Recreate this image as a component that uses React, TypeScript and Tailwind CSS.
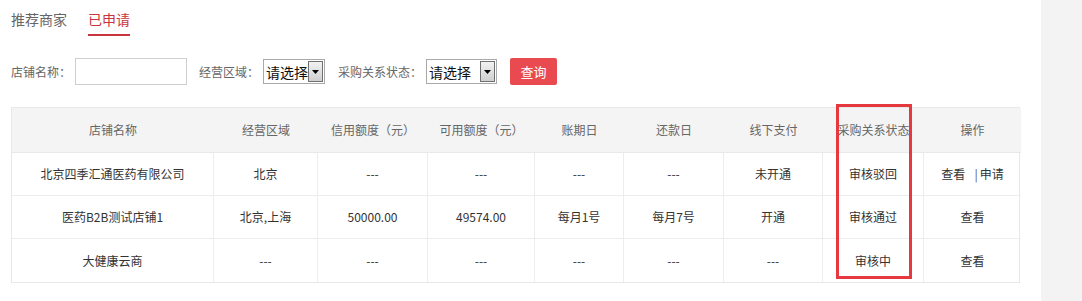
import { Fragment } from 'react';

const font = { fontFamily: '"Noto Sans CJK SC", "Microsoft YaHei", sans-serif' };

const headers = [
  '店铺名称',
  '经营区域',
  '信用额度（元）',
  '可用额度（元）',
  '账期日',
  '还款日',
  '线下支付',
  '采购关系状态',
  '操作',
];

const rows: string[][] = [
  ['北京四季汇通医药有限公司', '北京', '---', '---', '---', '---', '未开通', '审核驳回', 'both'],
  ['医药B2B测试店铺1', '北京,上海', '50000.00', '49574.00', '每月1号', '每月7号', '开通', '审核通过', 'view'],
  ['大健康云商', '---', '---', '---', '---', '---', '---', '审核中', 'view'],
];

function SelectBox({ width }: { width: string }) {
  return (
    <div className={`${width} h-[25px] flex items-center justify-between border border-[#a9a9a9] bg-white pl-[2px] pr-[1px]`}>
      <span className="text-[14px] leading-[20px] text-[#111] whitespace-nowrap">请选择</span>
      <span className="shrink-0 w-[15px] h-[21px] flex items-center justify-center border border-[#707070] bg-gradient-to-b from-[#f2f2f2] to-[#cfcfcf]">
        <svg width="7" height="4" viewBox="0 0 7 4">
          <path d="M0 0h7L3.5 4z" fill="#000" />
        </svg>
      </span>
    </div>
  );
}

export default function App() {
  return (
    <div className="w-[1082px] h-[301px] flex bg-white overflow-hidden" style={font}>
      <div className="w-[1041px] pl-[11px] pt-[9px]">
        {/* Tabs */}
        <div className="flex items-start gap-[21px] h-[27px]">
          <span className="text-[14px] leading-[20px] text-[#666]">推荐商家</span>
          <span className="flex flex-col">
            <span className="text-[14px] leading-[20px] text-[#c9353c]">已申请</span>
            <span className="mt-[5px] h-[2px] w-[42px] bg-[#c9353c]" />
          </span>
        </div>

        {/* Filters */}
        <div className="mt-[22px] flex items-center h-[27px] text-[12px] text-[#666] whitespace-nowrap">
          <span>店铺名称：</span>
          <div className="ml-[4px] w-[112px] h-[27px] border border-[#cfcfcf] bg-white" />
          <span className="ml-[12px]">经营区域：</span>
          <div className="ml-[4px]">
            <SelectBox width="w-[62px]" />
          </div>
          <span className="ml-[13px]">采购关系状态：</span>
          <div className="ml-[4px]">
            <SelectBox width="w-[71px]" />
          </div>
          <button className="ml-[13px] w-[47px] h-[27px] rounded-[2px] bg-[#e84a50] text-white text-[13px]">查询</button>
        </div>

        {/* Table */}
        <div className="relative mt-[22px] w-[1009px]">
          <div className="grid grid-cols-[202px_104px_110px_107px_89px_100px_99px_101px_97px] border border-[#e8e8e8] text-[12px]">
            {headers.map((h) => (
              <div key={h} className="h-[45px] flex items-center justify-center bg-[#f4f4f4] text-[#666] border-b border-[#e8e8e8] whitespace-nowrap">
                {h}
              </div>
            ))}
            {rows.map((r, ri) => (
              <Fragment key={ri}>
                {r.map((c, ci) => (
                  <div
                    key={ci}
                    className={`h-[43px] flex items-center justify-center text-[#333] whitespace-nowrap ${ci < 8 ? 'border-r border-[#ededed]' : ''} ${ri < 2 ? 'border-b border-[#ededed]' : ''}`}
                  >
                    {c === 'both' ? (
                      <span>
                        查看<span className="ml-[9px] mr-[2px] text-[#555]">|</span>申请
                      </span>
                    ) : c === 'view' ? (
                      '查看'
                    ) : (
                      c
                    )}
                  </div>
                ))}
              </Fragment>
            ))}
          </div>
          {/* annotation box */}
          <div className="absolute left-[825px] top-[-3px] w-[76px] h-[175px] border-[3px] border-[#e5393f] pointer-events-none" />
        </div>
      </div>
      <div className="w-[41px] h-full bg-[#f3f3f3]" />
    </div>
  );
}
